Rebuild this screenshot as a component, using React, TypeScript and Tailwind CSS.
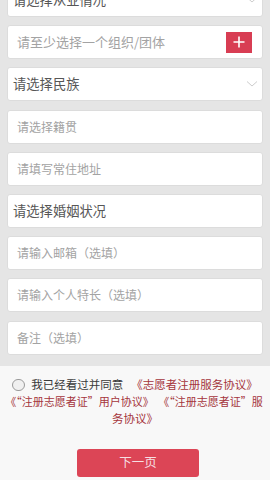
import React from 'react';

const font = { fontFamily: '"Noto Sans CJK SC", "Noto Sans", sans-serif' };

function Chevron() {
  return (
    <svg width="12" height="8" viewBox="0 0 12 8" className="shrink-0">
      <polyline points="1,1.5 6,6 11,1.5" fill="none" stroke="#cdcdcd" strokeWidth="1" />
    </svg>
  );
}

// select-like rows have darker text, inputs have pale placeholder
function SelectRow({ label }: { label: string }) {
  return (
    <div className="h-[34px] bg-white rounded-[3px] border border-[#dcdcdc] flex items-center justify-between pl-[5px] pr-[4px]">
      <span className="text-[13.3px] text-[#565656]">{label}</span>
      <Chevron />
    </div>
  );
}

function InputRow({ label, dark }: { label: string; dark?: boolean }) {
  return (
    <div className="h-[34px] bg-white rounded-[3px] border border-[#dcdcdc] flex items-center pl-[9px]">
      <span className={dark ? 'text-[13.3px] text-[#565656] -ml-[4px]' : 'text-[12px] text-[#a3a3a3]'}>{label}</span>
    </div>
  );
}

export default function App() {
  return (
    <div className="w-[270px] h-[480px] overflow-hidden bg-[#f8f8f8]" style={font}>
      <div className="bg-[#e5e5e5] px-[7px] pb-[11px]">
        <div className="flex flex-col gap-[8.2px] -mt-[17px]">
          <SelectRow label="请选择从业情况" />
          <div className="h-[34px] bg-white rounded-[3px] border border-[#dcdcdc] flex items-center justify-between pl-[9px] pr-[10px]">
            <span className="text-[13px] text-[#a3a3a3]">请至少选择一个组织/团体</span>
            <button className="w-[26px] h-[21px] bg-[#d83d53] flex items-center justify-center">
              <svg width="12" height="12" viewBox="0 0 12 12">
                <path d="M6 0.5V11.5M0.5 6H11.5" stroke="#fff" strokeWidth="1.6" />
              </svg>
            </button>
          </div>
          <SelectRow label="请选择民族" />
          <InputRow label="请选择籍贯" />
          <InputRow label="请填写常住地址" />
          <InputRow label="请选择婚姻状况" dark />
          <InputRow label="请输入邮箱（选填）" />
          <InputRow label="请输入个人特长（选填）" />
          <InputRow label="备注（选填）" />
        </div>
      </div>

      <div className="pt-[10px] text-center text-[11.5px] leading-[17px]">
        <div className="whitespace-nowrap">
          <span className="inline-block align-[-2px] w-[13px] h-[12px] rounded-full border border-[#9a9a9a] bg-[#f0f0f0] mr-[6px]" />
          <span className="text-[#3a3a3a]">我已经看过并同意</span>
          <span className="text-[#a5353c] ml-[8px]">《志愿者注册服务协议》</span>
        </div>
        <div className="whitespace-nowrap text-[#a5353c] text-[11px] -ml-[2px]">
          <span>《“注册志愿者证”用户协议》</span>
          <span className="ml-[10px]">《“注册志愿者证”服</span>
        </div>
        <div className="text-[#a5353c]">务协议》</div>
      </div>

      <div className="flex justify-center mt-[22px] pl-[6px]">
        <button className="w-[122px] h-[28px] rounded-[3px] bg-[#dc4556] text-[12.5px] text-[#f6dfe2]">下一页</button>
      </div>
    </div>
  );
}
